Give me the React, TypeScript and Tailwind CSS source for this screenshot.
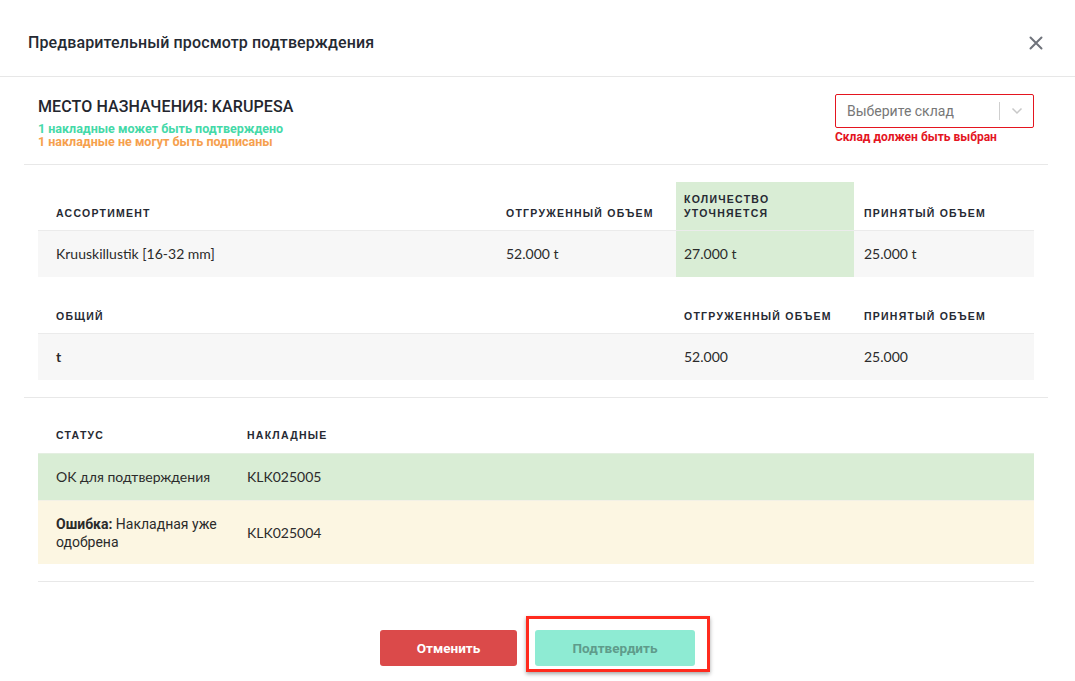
import React from "react";

const HEAD = "text-[10.5px] font-bold tracking-[1.25px] uppercase text-[#262a33] leading-[14px] [font-family:'Liberation_Sans',Arial,sans-serif]";
const VAL = "text-[14px] leading-[20px] text-[#2b2b2b] [font-family:Lato,'Noto_Sans',sans-serif]";

export default function App() {
  return (
    <div className="w-full h-[681px] overflow-hidden bg-white [font-family:Roboto,'Noto_Sans',sans-serif]">
      {/* Header */}
      <div className="flex items-center justify-between pl-[28px] pr-[32px] pt-[31px] pb-[21px] border-b border-[#e7e7e7]">
        <h1 className="text-[16px] leading-[24px] font-medium tracking-[0.12px] text-[#252a33]">
          Предварительный просмотр подтверждения
        </h1>
        <svg width="14" height="14" viewBox="0 0 14 14" className="text-[#6f737b]">
          <path d="M1.5 1.5 L12.5 12.5 M12.5 1.5 L1.5 12.5" stroke="currentColor" strokeWidth="2" strokeLinecap="round" />
        </svg>
      </div>

      <div className="pl-6 pr-[27px]">
        {/* Section 1 */}
        <div className="flex items-start justify-between border-b border-[#e8e8e8] px-[14px] pt-[17px] pb-[16px]">
          <div className="pt-[3px]">
            <div className="text-[16px] leading-[20px] font-medium tracking-[0.1px] text-[#23262e]">
              МЕСТО НАЗНАЧЕНИЯ: KARUPESA
            </div>
            <div className="mt-[5px] text-[12.5px] leading-[13px] font-bold text-[#45d9a8]">
              1 накладные может быть подтверждено
            </div>
            <div className="text-[12.5px] leading-[13px] font-bold text-[#f6a04d]">
              1 накладные не могут быть подписаны
            </div>
          </div>
          <div className="w-[199px]">
            <div className="flex h-[34px] items-center border border-[#e4151f] rounded-[2px] bg-white">
              <span className="flex-1 pl-[11px] text-[14px] text-[#777777]">Выберите склад</span>
              <span className="h-[18px] w-px bg-[#cfcfcf]" />
              <span className="flex w-[33px] justify-center">
                <svg width="12" height="8" viewBox="0 0 12 8">
                  <path d="M1.5 1.5 L6 6 L10.5 1.5" fill="none" stroke="#c8c8c8" strokeWidth="1.5" />
                </svg>
              </span>
            </div>
            <div className="mt-[1px] text-[12px] leading-[16px] font-bold text-[#e4151f]">
              Склад должен быть выбран
            </div>
          </div>
        </div>

        {/* Section 2 */}
        <div className="border-b border-[#e8e8e8] px-[14px] pt-[17px] pb-[17px]">
          <div className="grid grid-cols-[450px_188px_178px_180px]">
            <div className={`flex items-end px-[18px] py-[10px] ${HEAD}`}>Ассортимент</div>
            <div className={`flex items-end px-[18px] py-[10px] ${HEAD}`}>Отгруженный объем</div>
            <div className={`flex items-end bg-[#d9edd5] px-[8px] py-[10px] ${HEAD}`}>
              Количество<br />уточняется
            </div>
            <div className={`flex items-end px-[10px] py-[10px] ${HEAD}`}>Принятый объем</div>

            <div className={`border-t border-[#ebebeb] bg-[#f7f7f7] px-[18px] py-[13px] ${VAL}`}>Kruuskillustik [16-32 mm]</div>
            <div className={`border-t border-[#ebebeb] bg-[#f7f7f7] px-[18px] py-[13px] ${VAL}`}>52.000 t</div>
            <div className={`border-t border-[#ebebeb] bg-[#d9edd5] px-[8px] py-[13px] ${VAL}`}>27.000 t</div>
            <div className={`border-t border-[#ebebeb] bg-[#f7f7f7] px-[10px] py-[13px] ${VAL}`}>25.000 t</div>
          </div>

          <div className="mt-[22px] grid grid-cols-[638px_178px_180px]">
            <div className={`px-[18px] pt-[10px] pb-[10px] ${HEAD}`}>Общий</div>
            <div className={`px-[8px] pt-[10px] pb-[10px] ${HEAD}`}>Отгруженный объем</div>
            <div className={`px-[10px] pt-[10px] pb-[10px] ${HEAD}`}>Принятый объем</div>

            <div className={`border-t border-[#ebebeb] bg-[#f7f7f7] px-[18px] py-[13px] font-bold ${VAL}`}>t</div>
            <div className={`border-t border-[#ebebeb] bg-[#f7f7f7] px-[8px] py-[13px] ${VAL}`}>52.000</div>
            <div className={`border-t border-[#ebebeb] bg-[#f7f7f7] px-[10px] py-[13px] ${VAL}`}>25.000</div>
          </div>
        </div>

        {/* Section 3 */}
        <div className="px-[14px] pt-[20px]">
          <div className="border-b border-[#e8e8e8] pb-[17px]">
            <div className="grid grid-cols-[191px_1fr]">
              <div className={`px-[18px] pt-[10px] pb-[11px] ${HEAD}`}>Статус</div>
              <div className={`px-[18px] pt-[10px] pb-[11px] ${HEAD}`}>Накладные</div>

              <div className={`border-t border-[#e4efe1] bg-[#d9edd5] px-[18px] py-[13px] ${VAL}`}>OK для подтверждения</div>
              <div className={`border-t border-[#e4efe1] bg-[#d9edd5] px-[18px] py-[13px] ${VAL}`}>KLK025005</div>

              <div className="flex flex-col justify-center border-t border-[#f3f1e6] bg-[#fcf6e2] pl-[18px] pr-[12px] pt-[14px] pb-[13px] text-[14px] leading-[18px] text-[#2b2b2b] [font-family:Roboto,'Noto_Sans',sans-serif]">
                <div className="whitespace-nowrap">
                  <b className="font-bold">Ошибка:</b> <span>Накладная уже</span>
                </div>
                <div>одобрена</div>
              </div>
              <div className={`flex items-center border-t border-[#f3f1e6] bg-[#fcf6e2] px-[18px] ${VAL}`}>KLK025004</div>
            </div>
          </div>
        </div>
      </div>

      {/* Buttons */}
      <div className="flex justify-center gap-[18px] pt-[48px]">
        <button className="h-[36px] w-[137px] rounded-[3px] bg-[#db4a4a] text-[13.5px] font-bold text-white">
          Отменить
        </button>
        <div className="relative">
          <button className="h-[36px] w-[160px] rounded-[3px] bg-[#8eebd3] text-[13.5px] font-bold text-[#5f9c8b]">
            Подтвердить
          </button>
          <div className="pointer-events-none absolute left-[-9px] right-[-15px] top-[-14px] bottom-[-6px] border-[3px] border-[#ff2b1e] shadow-[0_2px_4px_rgba(0,0,0,0.35)]" />
        </div>
      </div>
    </div>
  );
}
